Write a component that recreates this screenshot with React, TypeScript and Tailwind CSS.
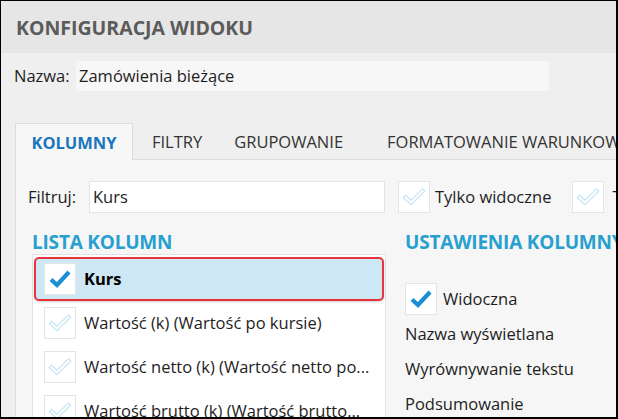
import React from "react";

function Check({ on }: { on: boolean }) {
  return (
    <span className="w-[32px] h-[32px] shrink-0 bg-white border border-[#e4e4e4] flex items-center justify-center">
      {on ? (
        <svg width="24" height="24" viewBox="0 0 24 24">
          <path d="M3 12.5 L9 18 L21 5" fill="none" stroke="#1b8fd2" strokeWidth="4.2" strokeLinejoin="miter" />
        </svg>
      ) : (
        <svg width="24" height="24" viewBox="0 0 24 24">
          <path d="M3.5 12.5 L9 17.5 L20.5 6" fill="none" stroke="#c3e5f5" strokeWidth="4.4" strokeLinejoin="miter" strokeLinecap="square" />
          <path d="M3.5 12.5 L9 17.5 L20.5 6" fill="none" stroke="#ffffff" strokeWidth="2" strokeLinejoin="miter" strokeLinecap="square" />
        </svg>
      )}
    </span>
  );
}

const rows = [
  { label: "Kurs", on: true, active: true },
  { label: "Wartość (k) (Wartość po kursie)", on: false },
  { label: "Wartość netto (k) (Wartość netto po...", on: false },
  { label: "Wartość brutto (k) (Wartość brutto...", on: false },
];

export default function App() {
  return (
    <div
      className="w-[618px] h-[419px] overflow-hidden flex flex-col bg-[#efefef] border-t border-l border-r-2 border-b-2 border-black text-[16.5px] text-[#1e1e1e]"
      style={{ fontFamily: '"Open Sans", "Noto Sans", sans-serif' }}
    >
      <div className="h-[52px] shrink-0 bg-[#e6e6e6] flex items-center px-[15px] pt-[2px]">
        <span className="text-[19.5px] font-bold text-[#5b5b5b]">KONFIGURACJA WIDOKU</span>
      </div>

      <div className="mt-[8px] flex items-center pl-[13px] shrink-0">
        <span className="w-[62px] shrink-0">Nazwa:</span>
        <div className="w-[473px] h-[30px] shrink-0 bg-[#f7f7f7] flex items-center pl-[3px]">Zamówienia bieżące</div>
      </div>

      <div className="mt-[31px] ml-[14px] flex items-end whitespace-nowrap shrink-0">
        <div className="h-[37px] w-[118px] shrink-0 border border-b-0 border-[#dcdcdc] bg-[#f7f7f7] flex items-center justify-center pt-[2px] text-[#1b76bc] font-bold relative top-[1px]">
          KOLUMNY
        </div>
        <div className="h-[37px] shrink-0 flex items-center pt-[3px] pl-[19px] text-[#333]">FILTRY</div>
        <div className="h-[37px] shrink-0 flex items-center pt-[3px] pl-[32px] text-[#333]">GRUPOWANIE</div>
        <div className="h-[37px] shrink-0 flex items-center pt-[3px] pl-[44px] text-[#333]">FORMATOWANIE WARUNKOWE</div>
      </div>

      <div className="flex-1 ml-[14px] border-l border-t border-[#dcdcdc] bg-[#f6f6f6] flex flex-col">
        <div className="mt-[21px] flex items-center pl-[12px] whitespace-nowrap">
          <span className="w-[61px] shrink-0">Filtruj:</span>
          <div className="w-[296px] h-[32px] shrink-0 bg-white border border-[#e4e4e4] flex items-center pl-[3px]">Kurs</div>
          <div className="ml-[13px] shrink-0 flex items-center gap-[5px]">
            <Check on={false} />
            <span>Tylko widoczne</span>
          </div>
          <div className="ml-[21px] shrink-0 flex items-center gap-[8px]">
            <Check on={false} />
            <span>Tylko zaznaczone</span>
          </div>
        </div>

        <div className="mt-[18px] flex whitespace-nowrap">
          <div className="ml-[16px] w-[354px] shrink-0 flex flex-col">
            <span className="text-[19px] font-bold text-[#27a0cf] leading-[22px] tracking-[-0.2px]">LISTA KOLUMN</span>
            <div className="mt-[1px] border border-b-0 border-[#e2e2e2] bg-white px-[1px] pt-[2px] flex flex-col">
              {rows.map((r) => (
                <div
                  key={r.label}
                  className={
                    r.active
                      ? "h-[44px] flex items-center gap-[8px] pl-[8px] bg-[#cde8f4] border-2 border-[#e8343a] rounded-[5px] shadow-[0_1px_2px_rgba(0,0,0,0.2)] font-bold text-black"
                      : "h-[44px] flex items-center gap-[8px] pl-[10px] overflow-hidden"
                  }
                >
                  <Check on={r.on} />
                  <span>{r.label}</span>
                </div>
              ))}
            </div>
          </div>

          <div className="ml-[19px] shrink-0 flex flex-col">
            <span className="text-[19px] font-bold text-[#27a0cf] leading-[22px] tracking-[-0.2px]">USTAWIENIA KOLUMNY</span>
            <div className="mt-[30px] flex items-center gap-[6px]">
              <Check on={true} />
              <span>Widoczna</span>
            </div>
            <span className="mt-[9px] leading-[20px]">Nazwa wyświetlana</span>
            <span className="mt-[15px] leading-[20px]">Wyrównywanie tekstu</span>
            <span className="mt-[15px] leading-[20px]">Podsumowanie</span>
          </div>
        </div>
      </div>
    </div>
  );
}
